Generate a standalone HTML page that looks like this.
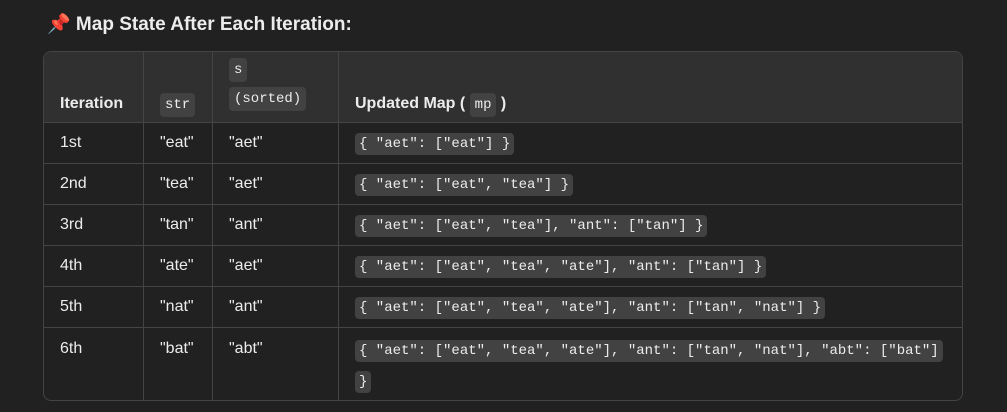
<!DOCTYPE html>
<html><head><style>
body{margin:0;background:#212121;width:1007px;height:412px;overflow:hidden;font-family:"Liberation Sans",sans-serif;color:#ececec;position:relative}
h3{position:absolute;left:47px;top:12px;margin:0;font-size:19px;font-weight:bold;line-height:26px}
.t{position:absolute;left:43px;top:51px;width:918px;height:348px;border:1px solid #444;border-radius:8px;overflow:hidden}
table{border-collapse:collapse;width:100%;font-size:16px}
td,th{border-right:1px solid #444;border-bottom:1px solid #444;padding:0 16px;text-align:left;vertical-align:middle}
td:last-child,th:last-child{border-right:none}
tr:last-child td{border-bottom:none}
th{background:#303030;height:61px;vertical-align:bottom;padding-bottom:9px;font-weight:bold}
td{height:40px}
code{font-family:"Liberation Mono",monospace;font-size:14px;background:#424242;border-radius:4px;padding:3px 4px;font-weight:normal}
th code{padding:4px 5px}
</style></head><body>
<h3>📌 Map State After Each Iteration:</h3>
<div class="t"><table>
<tr><th style="width:67px">Iteration</th><th style="width:36px"><code>str</code></th><th style="width:93px"><div style="line-height:28px"><code>s</code><br><code>(sorted)</code></div></th><th>Updated Map ( <code>mp</code> )</th></tr>
<tr><td>1st</td><td>"eat"</td><td>"aet"</td><td><code>{ "aet": ["eat"] }</code></td></tr>
<tr><td>2nd</td><td>"tea"</td><td>"aet"</td><td><code>{ "aet": ["eat", "tea"] }</code></td></tr>
<tr><td>3rd</td><td>"tan"</td><td>"ant"</td><td><code>{ "aet": ["eat", "tea"], "ant": ["tan"] }</code></td></tr>
<tr><td>4th</td><td>"ate"</td><td>"aet"</td><td><code>{ "aet": ["eat", "tea", "ate"], "ant": ["tan"] }</code></td></tr>
<tr><td>5th</td><td>"nat"</td><td>"ant"</td><td><code>{ "aet": ["eat", "tea", "ate"], "ant": ["tan", "nat"] }</code></td></tr>
<tr><td style="height:70px;vertical-align:top;padding-top:12px">6th</td><td style="vertical-align:top;padding-top:12px">"bat"</td><td style="vertical-align:top;padding-top:12px">"abt"</td><td style="line-height:30px;padding-top:7px;vertical-align:top"><code>{ "aet": ["eat", "tea", "ate"], "ant": ["tan", "nat"], "abt": ["bat"]</code><br><code>}</code></td></tr>
</table></div>
</body></html>
